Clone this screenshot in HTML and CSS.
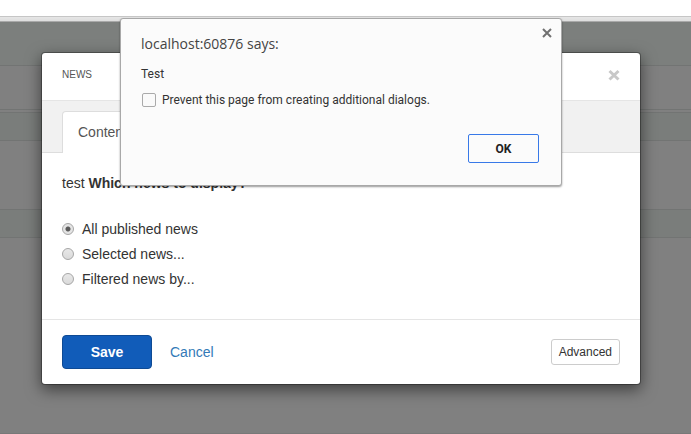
FILE: index.html
```
<!DOCTYPE html>
<html lang="en">

<head>
    <meta charset="UTF-8">
    <meta name="viewport" content="width=device-width, initial-scale=1.0">
    <title>News</title>
    <link rel="stylesheet" href="styles.css">
</head>

<body>

    <div class="toolbar"></div>

    <!-- dimmed page behind the modal -->
    <div class="page">
        <div class="band band-top"></div>
        <div class="band band-row"></div>
        <div class="band band-line"></div>
        <div class="band band-head"></div>
        <div class="band band-content"></div>
        <div class="band band-head"></div>
    </div>

    <div class="modal-wrap">
        <form class="modal">
            <div class="modal-header">
                <h4>NEWS</h4>
                <button type="button" class="close" aria-label="Close">
                    <svg width="12" height="12" viewBox="0 0 12 12">
                        <path d="M1.500 2l9 8.500M10.500 2l-9 8.500" />
                    </svg>
                </button>
            </div>
            <div class="tabs">
                <a class="tab" href="#content">Content</a>
            </div>
            <div class="modal-body" id="content">
                <p>test <b>Which news to display?</b></p>
                <label><input type="radio" name="news" checked> All published news</label>
                <label><input type="radio" name="news"> Selected news...</label>
                <label><input type="radio" name="news"> Filtered news by...</label>
            </div>
            <div class="modal-footer">
                <button type="button" class="save">Save</button>
                <a class="cancel" href="#">Cancel</a>
                <button type="button" class="advanced">Advanced</button>
            </div>
        </form>
    </div>

    <div class="alert-wrap">
        <div class="alert" role="alertdialog" aria-labelledby="alert-title">
            <div class="alert-top">
                <h1 id="alert-title">localhost:60876 says:</h1>
                <button type="button" class="alert-close" aria-label="Close">
                    <svg width="10" height="10" viewBox="0 0 10 10">
                        <path d="M1 1l8 8M9 1l-8 8" />
                    </svg>
                </button>
            </div>
            <p>Test</p>
            <label><input type="checkbox"> Prevent this page from creating additional dialogs.</label>
            <div class="alert-buttons">
                <button type="button" class="ok">OK</button>
            </div>
        </div>
    </div>

</body>

</html>
```

FILE: styles.css
```
* {
    box-sizing: border-box;
}

body {
    font-family: 'Liberation Sans', Arial, sans-serif;
    font-size: 14px;
    line-height: 20px;
    color: #333;
    background-color: #fff;
    margin: 0;
    min-height: 100vh;
    display: flex;
    flex-direction: column;
}

h1,
h4,
p {
    margin: 0;
    font-weight: normal;
}

button {
    font-family: inherit;
    padding: 0;
    cursor: pointer;
}

.toolbar {
    height: 22px;
    flex-shrink: 0;
    border-bottom: 1px solid #a9a9a9;
    background: linear-gradient(#fff 16px, #c6c6c6 16px, #c6c6c6 17px, #e6e6e6 17px, #dedede);
}

.page {
    flex: 1;
    background-color: #808080;
    border-bottom: 1px solid #787878;
}

.band {
    border-bottom: 1px solid #727473;
}

.band-top {
    height: 44px;
    background-color: #7c7f7d;
}

.band-row {
    height: 44px;
}

.band-line {
    height: 3px;
}

.band-head {
    height: 28px;
    background-color: #7a7d7b;
}

.band-content {
    height: 69px;
}

/* Modal */
.modal-wrap {
    position: absolute;
    top: 52px;
    left: 0;
    right: 9px;
    padding: 0 41px;
}

.modal {
    background-color: #fff;
    background-clip: padding-box;
    border: 1px solid rgba(0, 0, 0, 0.3);
    border-radius: 4px;
    box-shadow: 0 5px 15px rgba(0, 0, 0, 0.5);
}

.modal-header {
    display: flex;
    align-items: center;
    justify-content: space-between;
    height: 48px;
    padding: 0 20px;
    padding-bottom: 4px;
    border-bottom: 1px solid #e5e5e5;
}

.modal-header h4 {
    font-size: 10px;
    color: #555;
}

.close,
.alert-close {
    display: flex;
    border: none;
    background: none;
}

.close path {
    stroke: #c8c8c8;
    stroke-width: 3;
}

.tabs {
    display: flex;
    height: 52px;
    padding: 10px 20px 0;
    background-color: #f1f1f1;
    border-bottom: 1px solid #ddd;
}

.tab {
    height: 42px;
    padding: 10px 15px;
    background-color: #fff;
    border: 1px solid #ddd;
    border-bottom: none;
    border-radius: 4px 4px 0 0;
    color: #555;
    text-decoration: none;
}

.modal-body {
    padding: 20px 20px 25px;
}

.modal-body p {
    margin-bottom: 26px;
}

.modal-body label {
    display: flex;
    align-items: center;
    gap: 8px;
    margin-bottom: 5px;
}

.modal-body input {
    appearance: none;
    width: 12px;
    height: 12px;
    margin: 0;
    border: 1px solid #a6a6a6;
    border-radius: 50%;
    background: linear-gradient(#e8e8e8, #dadada);
}

.modal-body input:checked {
    background: radial-gradient(circle, #5a5a5a 2px, #e4e4e4 3px);
}

.modal-footer {
    display: flex;
    align-items: center;
    padding: 15px 20px;
    border-top: 1px solid #e5e5e5;
}

.save {
    width: 90px;
    height: 34px;
    margin-right: 18px;
    background-color: #115cb9;
    border: 1px solid #0e4a94;
    border-radius: 4px;
    color: #fff;
    font-size: 14px;
    font-weight: bold;
}

.cancel {
    color: #337ab7;
    text-decoration: none;
}

.advanced {
    margin-left: auto;
    height: 26px;
    padding: 0 7px;
    background-color: #fff;
    border: 1px solid #ccc;
    border-radius: 3px;
    color: #333;
    font-size: 12px;
}

/* Browser alert */
.alert-wrap {
    position: absolute;
    top: 18px;
    left: 0;
    right: 9px;
}

.alert {
    max-width: 442px;
    margin: 0 auto;
    padding: 15px 22px 22px 20px;
    background-color: #fbfbfb;
    border: 1px solid #a8a8a8;
    border-radius: 3px;
    box-shadow: 0 1px 2px rgba(0, 0, 0, 0.4);
    font-family: Roboto, 'Open Sans', sans-serif;
    font-size: 12px;
    color: #333;
}

.alert-top {
    display: flex;
    justify-content: space-between;
    align-items: flex-start;
    margin-bottom: 10px;
}

.alert h1 {
    font-family: 'Open Sans', sans-serif;
    font-size: 14px;
    color: #444;
}

.alert-close {
    margin: -6px -13px 0 0;
}

.alert-close path {
    stroke: #707070;
    stroke-width: 2;
}

.alert p {
    margin-bottom: 6px;
}

.alert label {
    display: flex;
    align-items: center;
    gap: 6px;
}

.alert input {
    appearance: none;
    width: 14px;
    height: 14px;
    margin: 0 0 0 1px;
    border: 1px solid #aaa;
    border-radius: 2px;
    background-color: #fafafa;
}

.alert-buttons {
    display: flex;
    justify-content: flex-end;
    margin-top: 24px;
}

.ok {
    width: 71px;
    height: 29px;
    background-color: #fbfbfb;
    border: 1px solid #3879e8;
    border-radius: 2px;
    color: #222;
    font-size: 12px;
    font-weight: bold;
}
```
